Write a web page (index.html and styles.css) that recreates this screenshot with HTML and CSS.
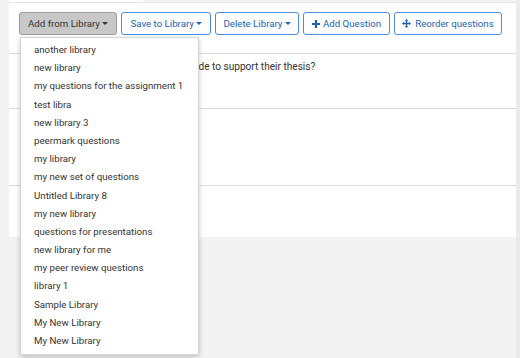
FILE: index.html
```html
<!DOCTYPE html>
<html>
<head>
<meta charset="utf-8">
<link rel="stylesheet" href="styles.css">
</head>
<body>
<div class="page">
  <div class="main">
    <div class="tab"></div>
    <div class="panel">
      <div class="toolbar">
        <div class="dd">
          <button class="btn btn-active">Add from Library<span class="caret"></span></button>
          <ul class="menu">
            <li>another library</li>
            <li>new library</li>
            <li>my questions for the assignment 1</li>
            <li>test libra</li>
            <li>new library 3</li>
            <li>peermark questions</li>
            <li>my library</li>
            <li>my new set of questions</li>
            <li>Untitled Library 8</li>
            <li>my new library</li>
            <li>questions for presentations</li>
            <li>new library for me</li>
            <li>my peer review questions</li>
            <li>library 1</li>
            <li>Sample Library</li>
            <li>My New Library</li>
            <li>My New Library</li>
          </ul>
        </div>
        <button class="btn">Save to Library<span class="caret"></span></button>
        <button class="btn btn-del">Delete Library<span class="caret"></span></button>
        <button class="btn btn-icon"><svg class="ico" viewBox="0 0 10 10" width="8" height="8"><path d="M3.6 0h2.8v3.6H10v2.8H6.4V10H3.6V6.4H0V3.6h3.6z" fill="currentColor"/></svg>Add Question</button>
        <button class="btn btn-move"><svg class="ico ico-move" viewBox="0 0 12 12" width="9" height="9"><path d="M6 0L8.4 2.6H6.9V5.1H9.4V3.6L12 6L9.4 8.4V6.9H6.9V9.4H8.4L6 12L3.6 9.4H5.1V6.9H2.6V8.4L0 6L2.6 3.6V5.1H5.1V2.6H3.6Z" fill="currentColor"/></svg>Reorder questions</button>
      </div>
      <div class="rows">
        <div class="row row1"><p class="q">What evidence does the writer provide to support their thesis?</p></div>
        <div class="row row2"></div>
        <div class="row row3"></div>
      </div>
    </div>
  </div>
  <div class="scroll"></div>
</div>
</body>
</html>
```

FILE: styles.css
```css
html, body {
  margin: 0;
  padding: 0;
  height: 100%;
}
body {
  background: #f3f3f3;
  font-family: Roboto, "Liberation Sans", Arial, sans-serif;
  color: #333;
  overflow: hidden;
}
.page {
  display: flex;
  height: 358px;
}
.main {
  width: 507px;
  margin-left: 9px;
}
.scroll {
  width: 4px;
  background: #ebebeb;
}
.tab {
  width: 134px;
  height: 2px;
  background: #fff;
}
.panel {
  background: #fff;
  border-top: 1px solid #e6e6e6;
}
.toolbar {
  display: flex;
  gap: 4px;
  padding: 9px 10px 0;
  height: 23px;
  align-items: flex-start;
}
.dd {
  position: relative;
}
.btn {
  height: 23px;
  box-sizing: border-box;
  padding: 0 8px;
  font-family: inherit;
  font-size: 9.7px;
  color: #2163b2;
  background: #fff;
  border: 1px solid #4a8fdc;
  border-radius: 3px;
  display: inline-flex;
  align-items: center;
  white-space: nowrap;
  cursor: pointer;
}
.btn-active {
  background: #c8c8c8;
  border-color: #9c9c9c;
  color: #333;
}
.btn-del {
  padding: 0 7px;
}
.btn-icon {
  padding: 0 8px;
}
.btn-move {
  padding: 0 7px;
}
.caret {
  display: inline-block;
  width: 0;
  height: 0;
  margin-left: 2.5px;
  border-top: 3px solid currentColor;
  border-left: 3px solid transparent;
  border-right: 3px solid transparent;
}
.ico {
  margin-right: 3px;
}
.ico-move {
  margin-right: 4px;
}
.menu {
  position: absolute;
  z-index: 5;
  top: 25px;
  left: 1px;
  width: 179px;
  box-sizing: border-box;
  margin: 0;
  padding: 3px 0 4px;
  list-style: none;
  background: #fff;
  border: 1px solid #d6d6d6;
  box-shadow: 0 2px 5px rgba(0, 0, 0, 0.22);
  font-size: 9.7px;
}
.menu li {
  height: 18.2px;
  line-height: 18.2px;
  padding-left: 13px;
  white-space: nowrap;
}
.rows {
  margin-top: 18px;
}
.row {
  border-top: 1px solid #dcdcdc;
}
.row1 {
  height: 54px;
}
.row2 {
  height: 76px;
}
.row3 {
  height: 51px;
}
.q {
  margin: 0;
  padding: 7px 0 0 30px;
  font-size: 10.1px;
  line-height: 12px;
  white-space: nowrap;
}
```
